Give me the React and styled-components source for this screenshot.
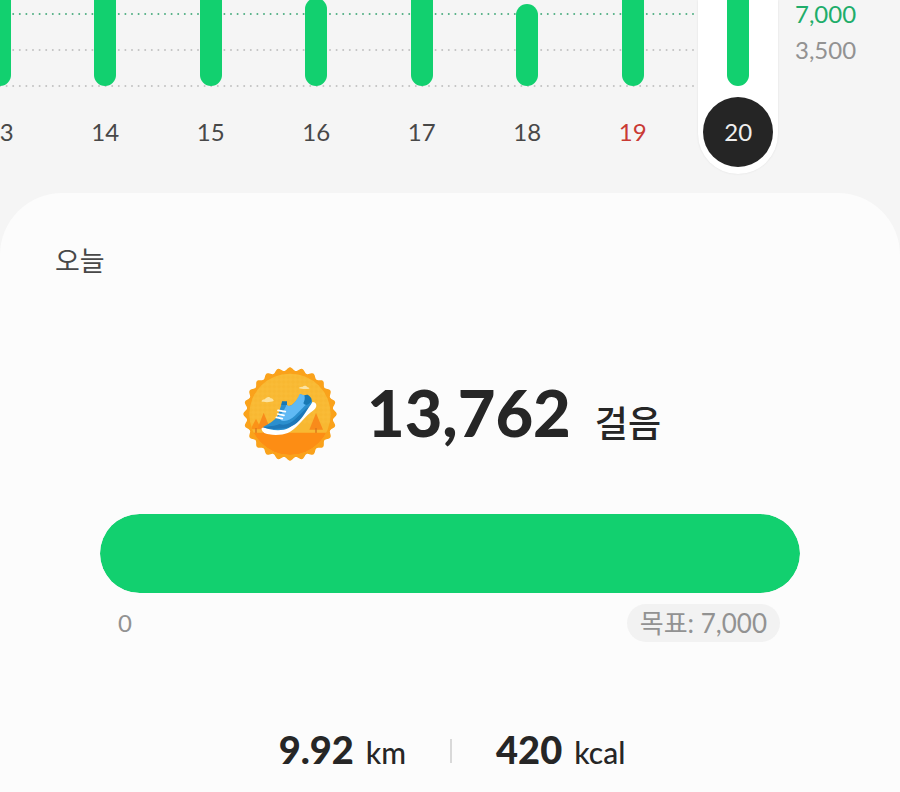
import React from "react";
import styled, { createGlobalStyle } from "styled-components";

const GlobalStyle = createGlobalStyle`
  * { box-sizing: border-box; }
  body {
    margin: 0;
    background: #fcfcfc;
    color: #262626;
    font-family: Lato, "Noto Sans CJK KR", sans-serif;
  }
`;

const Page = styled.div`
  display: flex;
  flex-direction: column;
  min-height: 100vh;
  overflow: hidden;
  background: #f5f5f5;
`;

const Chart = styled.section`
  position: relative;
  display: grid;
  grid-template-columns: minmax(0, 1fr) 109px;
  padding-bottom: 19px;
`;

const GridLines = styled.svg`
  position: absolute;
  top: 0;
  left: 0;
  width: calc(100% - 200px);
  height: 90px;
`;

const Days = styled.div`
  position: relative;
  display: grid;
  grid-template-columns: repeat(8, 1fr);
  justify-items: center;
  margin-left: -53px;
`;

const Day = styled.div`
  display: flex;
  flex-direction: column;
  align-items: center;
  gap: 11px;
  width: 80px;
  height: 174px;
  border-radius: 0 0 40px 40px;
  background: ${(p) => (p.$selected ? "#ffffff" : "transparent")};
  box-shadow: ${(p) => (p.$selected ? "0 0 2px #dedede" : "none")};
`;

const BarTrack = styled.div`
  display: flex;
  align-items: flex-end;
  height: 86px;
`;

const Bar = styled.div`
  width: 22px;
  border-radius: 11px;
  background: #12d06f;
`;

const DayButton = styled.button`
  width: 70px;
  height: 70px;
  padding: 0 0 2px;
  border: 0;
  border-radius: 50%;
  background: ${(p) => (p.$selected ? "#252525" : "transparent")};
  color: ${(p) => (p.$selected ? "#eeeeee" : p.$holiday ? "#c93a34" : "#484848")};
  font: inherit;
  font-size: 24px;
`;

const Axis = styled.div`
  display: flex;
  flex-direction: column;
  justify-content: flex-end;
  height: 86px;
  padding: 0 0 18px 4px;
`;

const AxisLabel = styled.span`
  color: ${(p) => (p.$goal ? "#20ad6a" : "#929292")};
  font-size: 24px;
  line-height: 36px;
`;

const Sheet = styled.main`
  flex: 1;
  border-radius: 62px 62px 0 0;
  background: #fcfcfc;
`;

const Title = styled.h1`
  margin: 0;
  padding: 48px 55px 0;
  color: #484848;
  font-size: 27px;
  font-weight: 400;
  line-height: 40px;
`;

const Steps = styled.div`
  display: flex;
  align-items: center;
  justify-content: center;
  gap: 30px;
  padding: 86px 0 53px 4px;
`;

const Badge = styled.svg`
  flex: none;
  width: 94px;
  height: 94px;
`;

const StepText = styled.p`
  display: flex;
  align-items: baseline;
  gap: 24px;
  margin: 0;
  padding-top: 6px;
  line-height: 72px;
`;

const StepCount = styled.strong`
  font-size: 65px;
  font-weight: 900;
`;

const StepUnit = styled.span`
  font-size: 36px;
  font-weight: 500;
`;

const Goal = styled.section`
  margin: 0 100px;
`;

const Progress = styled.div`
  height: 79px;
  overflow: hidden;
  border-radius: 40px;
  background: #eeeeee;
`;

const ProgressFill = styled.div`
  height: 100%;
  border-radius: 40px;
  background: #12d06f;
`;

const Scale = styled.div`
  display: flex;
  align-items: center;
  justify-content: space-between;
  padding: 11px 20px 0 18px;
  color: #929292;
  font-size: 24px;
  line-height: 38px;
`;

const Target = styled.span`
  padding: 0 13px;
  border-radius: 19px;
  background: #f2f2f2;
  font-size: 26px;
`;

const Stats = styled.div`
  display: flex;
  align-items: center;
  justify-content: center;
  gap: 44px;
  padding: 83px 0 16px 4px;
`;

const Stat = styled.p`
  display: flex;
  align-items: baseline;
  gap: 12px;
  margin: 0;
  line-height: 48px;
`;

const StatValue = styled.strong`
  font-size: 38px;
  font-weight: 900;
`;

const StatUnit = styled.span`
  font-size: 30px;
  font-weight: 500;
`;

const Divider = styled.span`
  width: 2px;
  height: 24px;
  background: #d9d9d9;
`;

const days = [
  { date: 13, height: 120 },
  { date: 14, height: 120 },
  { date: 15, height: 120 },
  { date: 16, height: 88 },
  { date: 17, height: 120 },
  { date: 18, height: 82 },
  { date: 19, height: 120, holiday: true },
  { date: 20, height: 120, selected: true },
];

const lines = [
  { y: 14, color: "#4fae82" },
  { y: 50, color: "#c2c2c2" },
  { y: 86, color: "#c2c2c2" },
];

const TEETH = 24;
const sealPath = (() => {
  const points = [];
  for (let i = 0; i < 720; i += 1) {
    const a = (i * Math.PI) / 360;
    const r = 135 + 5 * Math.cos(a * TEETH);
    points.push(`${(187 + r * Math.sin(a)).toFixed(1)} ${(180 - r * Math.cos(a)).toFixed(1)}`);
  }
  return `M${points.join("L")}Z`;
})();

function StepBadge() {
  return (
    <Badge viewBox="46 39 282 282" aria-hidden="true">
      <defs>
        <clipPath id="seal-disc">
          <circle cx="187" cy="181" r="122" />
        </clipPath>
        <pattern id="seal-dots" width="14" height="14" patternUnits="userSpaceOnUse">
          <path d="M0 7 7 0l7 7-7 7z" fill="#fbc13e" />
        </pattern>
      </defs>
      <path d={sealPath} fill="#faa21b" />
      <g clipPath="url(#seal-disc)">
        <path d="M60 50h260v260H60z" fill="#f8b832" />
        <path d="M60 50h260v160H60z" fill="url(#seal-dots)" opacity=".4" />
        <path d="M85 194 101 226H69z" fill="#fb9318" />
        <path d="M108 176 128 225H89z" fill="#f98b1b" />
        <path d="M265 177 286 227H245z" fill="#f98b1b" />
        <path d="M83 222h4v20h-4zM106 222h4v20h-4zM263 222h4v20h-4z" fill="#d9731b" />
        <path d="M60 236h260v80H60z" fill="#fd8d14" />
        <path d="M101 142c3-5 7-7 11-6 3-7 13-10 17-3 5-1 9 4 9 8-8 4-28 5-37 1z" fill="#fbe3a3" />
        <path d="M213 102c5-4 9-4 12-4 3-4 12-4 15 2 4 0 5 3 5 4-8 2-24 2-32-2z" fill="#fbe3a3" />
      </g>
      <path d="M102 222c-1 10 7 17 22 19 17 3 42 2 56-4 24-10 42-37 60-54 12-12 24-15 26-27 1-8-5-12-11-12L176 206z" fill="#fff" />
      <path d="M106 219c14-8 34-18 44-34l14-42 13 2c0 6 1 10 5 11 10 1 25-13 36-36l34 19c2 5 1 9-3 13-22 19-35 52-66 70-20 11-58 7-77-3z" fill="#2b8fce" />
      <path d="M177 150c4 14 26 2 39-30l27 7c4 11-6 25-18 35l-24 24c-12 11-24 17-39 14l-13-11c10-8 23-20 28-39z" fill="#60b9f4" />
      <path d="M230 124c7-3 12-3 16 3 6 6 7 10 5 15-9 12-17 14-24 6 3-6 6-14 3-24z" fill="#1878b4" />
      <path d="M106 220c17-3 37-4 49-10 14 6 33 0 47-14l48-46-18 28c-15 22-31 39-53 43-22 4-56 6-73-1z" fill="#1e78b8" />
      <path d="M151 169 173 173M150 180 169 184M146 190 164 194" fill="none" stroke="#fff" strokeWidth="5" strokeLinecap="round" />
      <path d="M163 142h15v11h-17z" fill="#1878b4" />
    </Badge>
  );
}

export default function App() {
  return (
    <>
      <GlobalStyle />
      <Page>
        <Chart>
          <GridLines aria-hidden="true">
            {lines.map((line) => (
              <line key={line.y} x1="0" x2="100%" y1={line.y} y2={line.y} stroke={line.color} strokeWidth="2" strokeLinecap="round" strokeDasharray="0 6.6" />
            ))}
          </GridLines>
          <Days>
            {days.map((day) => (
              <Day key={day.date} $selected={day.selected}>
                <BarTrack>
                  <Bar style={{ height: day.height }} />
                </BarTrack>
                <DayButton type="button" $selected={day.selected} $holiday={day.holiday}>
                  {day.date}
                </DayButton>
              </Day>
            ))}
          </Days>
          <Axis>
            <AxisLabel $goal>7,000</AxisLabel>
            <AxisLabel>3,500</AxisLabel>
          </Axis>
        </Chart>
        <Sheet>
          <Title>오늘</Title>
          <Steps>
            <StepBadge />
            <StepText>
              <StepCount>13,762</StepCount>
              <StepUnit>걸음</StepUnit>
            </StepText>
          </Steps>
          <Goal>
            <Progress role="progressbar" aria-label="걸음" aria-valuemin={0} aria-valuemax={7000} aria-valuenow={7000}>
              <ProgressFill style={{ width: "100%" }} />
            </Progress>
            <Scale>
              <span>0</span>
              <Target>목표: 7,000</Target>
            </Scale>
          </Goal>
          <Stats>
            <Stat>
              <StatValue>9.92</StatValue>
              <StatUnit>km</StatUnit>
            </Stat>
            <Divider />
            <Stat>
              <StatValue>420</StatValue>
              <StatUnit>kcal</StatUnit>
            </Stat>
          </Stats>
        </Sheet>
      </Page>
    </>
  );
}
